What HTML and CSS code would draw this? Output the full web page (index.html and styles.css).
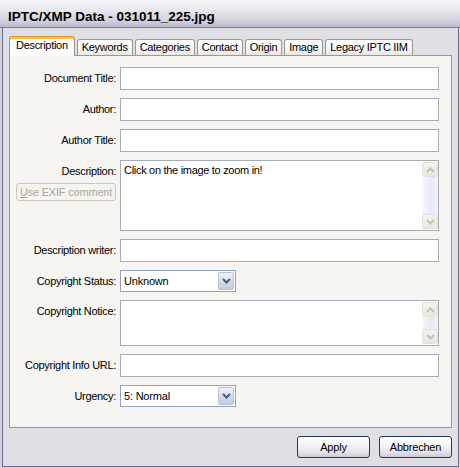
FILE: index.html
```html
<!DOCTYPE html>
<html lang="de">
<head>
    <meta charset="UTF-8">
    <title>IPTC/XMP Data - 031011_225.jpg</title>
    <link rel="stylesheet" href="styles.css">
</head>
<body>
    <div class="window">
        <div class="titlebar">IPTC/XMP Data - 031011_225.jpg</div>
        <div class="frame">
            <div class="tabs">
                <div class="tab active">Description</div>
                <div class="tab">Keywords</div>
                <div class="tab">Categories</div>
                <div class="tab">Contact</div>
                <div class="tab">Origin</div>
                <div class="tab">Image</div>
                <div class="tab">Legacy IPTC IIM</div>
            </div>

            <div class="panel">
                <div class="form">
                    <label class="label">Document Title:</label>
                    <div class="field"></div>

                    <label class="label">Author:</label>
                    <div class="field"></div>

                    <label class="label">Author Title:</label>
                    <div class="field"></div>

                    <div class="label">
                        Description:
                        <button class="small-btn" disabled><u>U</u>se EXIF comment</button>
                    </div>
                    <div class="memo tall">
                        <div class="memo-text">Click on the image to zoom in!</div>
                        <div class="scrollbar">
                            <span class="scroll-btn">
                                <svg width="9" height="6" viewBox="0 0 9 6"><path d="M1 5 L4.5 1.5 L8 5" fill="none" stroke="#c4c1b2" stroke-width="2"/></svg>
                            </span>
                            <span class="scroll-track"></span>
                            <span class="scroll-btn">
                                <svg width="9" height="6" viewBox="0 0 9 6"><path d="M1 1 L4.5 4.5 L8 1" fill="none" stroke="#c4c1b2" stroke-width="2"/></svg>
                            </span>
                        </div>
                    </div>

                    <label class="label">Description writer:</label>
                    <div class="field"></div>

                    <label class="label">Copyright Status:</label>
                    <div class="combo">
                        <span class="combo-value">Unknown</span>
                        <span class="combo-btn">
                            <svg width="9" height="6" viewBox="0 0 9 6"><path d="M1 1 L4.5 4.5 L8 1" fill="none" stroke="#4a5c80" stroke-width="2"/></svg>
                        </span>
                    </div>

                    <label class="label">Copyright Notice:</label>
                    <div class="memo short">
                        <div class="memo-text"></div>
                        <div class="scrollbar">
                            <span class="scroll-btn">
                                <svg width="9" height="6" viewBox="0 0 9 6"><path d="M1 5 L4.5 1.5 L8 5" fill="none" stroke="#c4c1b2" stroke-width="2"/></svg>
                            </span>
                            <span class="scroll-track"></span>
                            <span class="scroll-btn">
                                <svg width="9" height="6" viewBox="0 0 9 6"><path d="M1 1 L4.5 4.5 L8 1" fill="none" stroke="#c4c1b2" stroke-width="2"/></svg>
                            </span>
                        </div>
                    </div>

                    <label class="label">Copyright Info URL:</label>
                    <div class="field"></div>

                    <label class="label">Urgency:</label>
                    <div class="combo">
                        <span class="combo-value">5: Normal</span>
                        <span class="combo-btn">
                            <svg width="9" height="6" viewBox="0 0 9 6"><path d="M1 1 L4.5 4.5 L8 1" fill="none" stroke="#4a5c80" stroke-width="2"/></svg>
                        </span>
                    </div>
                </div>
            </div>

            <div class="actions">
                <button class="btn">Apply</button>
                <button class="btn">Abbrechen</button>
            </div>
        </div>
    </div>
</body>
</html>
```

FILE: styles.css
```css
body {
    margin: 0;
    font-family: "Liberation Sans", Arial, sans-serif;
    font-size: 11px;
    color: #000;
}
.window {
    width: 460px;
    height: 468px;
    box-sizing: border-box;
    padding: 0 1px 1px 2px;
    background: #d4d4de;
    display: flex;
    flex-direction: column;
}
.titlebar {
    height: 28px;
    box-sizing: border-box;
    margin: 0 -1px 0 -2px;
    padding: 7px 0 0 8px;
    line-height: 20px;
    font-size: 13.5px;
    font-weight: bold;
    background: linear-gradient(#f4f4f8 0%, #e6e6ee 40%, #d2d2e0 75%, #babacd 100%);
    border-bottom: 1px solid #7c7c98;
}
.frame {
    flex: 1;
    display: flex;
    flex-direction: column;
    background: #e0dfe3;
    border: 1px solid #6c6c8c;
    border-top: none;
    padding: 8px 6px 8px 6px;
}

/* tabs */
.tabs {
    display: flex;
    align-items: flex-end;
    height: 19px;
}
.tab {
    height: 16px;
    box-sizing: border-box;
    padding: 0 4px;
    margin-left: 2px;
    line-height: 15px;
    letter-spacing: -0.3px;
    border: 1px solid #919b9c;
    border-bottom: none;
    border-radius: 3px 3px 0 0;
    background: linear-gradient(#ffffff, #f5f4f0 60%, #e9e8e2);
}
.tab.active {
    position: relative;
    z-index: 1;
    height: 20px;
    margin-left: 0;
    margin-bottom: -1px;
    padding: 0 6px;
    line-height: 16px;
    border-top: 1px solid #e68b2c;
    box-shadow: inset 0 2px #ffc43c;
    background: #fcfcfe;
}

/* panel */
.panel {
    flex: 1;
    background: #f6f5f1;
    border: 1px solid #919b9c;
    padding: 11px 12px 0 0;
}
.form {
    display: grid;
    grid-template-columns: 106px 1fr;
    column-gap: 4px;
    row-gap: 8px;
}
.label {
    text-align: right;
    padding-top: 4px;
    line-height: 15px;
    letter-spacing: -0.3px;
}
.field {
    height: 23px;
    box-sizing: border-box;
    background: #fff;
    border: 1px solid #a5acb5;
}
.memo {
    display: flex;
    box-sizing: border-box;
    background: #fff;
    border: 1px solid #a5acb5;
}
.memo.tall {
    height: 71px;
}
.memo.short {
    height: 46px;
}
.memo-text {
    flex: 1;
    padding: 2px 3px;
    line-height: 14px;
    letter-spacing: -0.3px;
}
.scrollbar {
    width: 16px;
    display: flex;
    flex-direction: column;
    padding: 1px 0;
}
.scroll-btn {
    height: 15px;
    display: flex;
    align-items: center;
    justify-content: center;
    box-sizing: border-box;
    border: 1px solid #e4e2d8;
    border-radius: 2px;
    background: linear-gradient(#f4f3ee, #e9e8e0);
}
.scroll-track {
    flex: 1;
    background: linear-gradient(to right, #f8f8fb, #e6e9f3 60%, #f3f4f8);
}
.small-btn {
    display: block;
    margin: 4px 0 0 auto;
    width: 100px;
    height: 18px;
    padding: 0;
    font-family: inherit;
    font-size: 11px;
    letter-spacing: -0.2px;
    color: #aca899;
    background: #f5f4ee;
    border: 1px solid #c9c7ba;
    border-radius: 3px;
}
.combo {
    width: 116px;
    height: 22px;
    box-sizing: border-box;
    display: flex;
    align-items: center;
    background: #fff;
    border: 1px solid #8fa2bf;
}
.combo-value {
    flex: 1;
    padding-left: 3px;
    letter-spacing: -0.2px;
}
.combo-btn {
    width: 16px;
    height: 18px;
    margin-right: 1px;
    box-sizing: border-box;
    display: flex;
    align-items: center;
    justify-content: center;
    border: 1px solid #b9c1d6;
    border-radius: 2px;
    background: linear-gradient(#eef1f8, #d4d9e8 60%, #c5cbdc);
}

/* bottom buttons */
.actions {
    display: flex;
    justify-content: flex-end;
    gap: 9px;
    margin-top: 8px;
}
.btn {
    width: 73px;
    height: 22px;
    padding: 0;
    font-family: inherit;
    font-size: 11px;
    letter-spacing: -0.2px;
    color: #000;
    border: 1px solid #22386a;
    border-radius: 3px;
    background: linear-gradient(#ffffff, #f1f1f5 50%, #dcdce6 85%, #c8c8d6);
}
```
